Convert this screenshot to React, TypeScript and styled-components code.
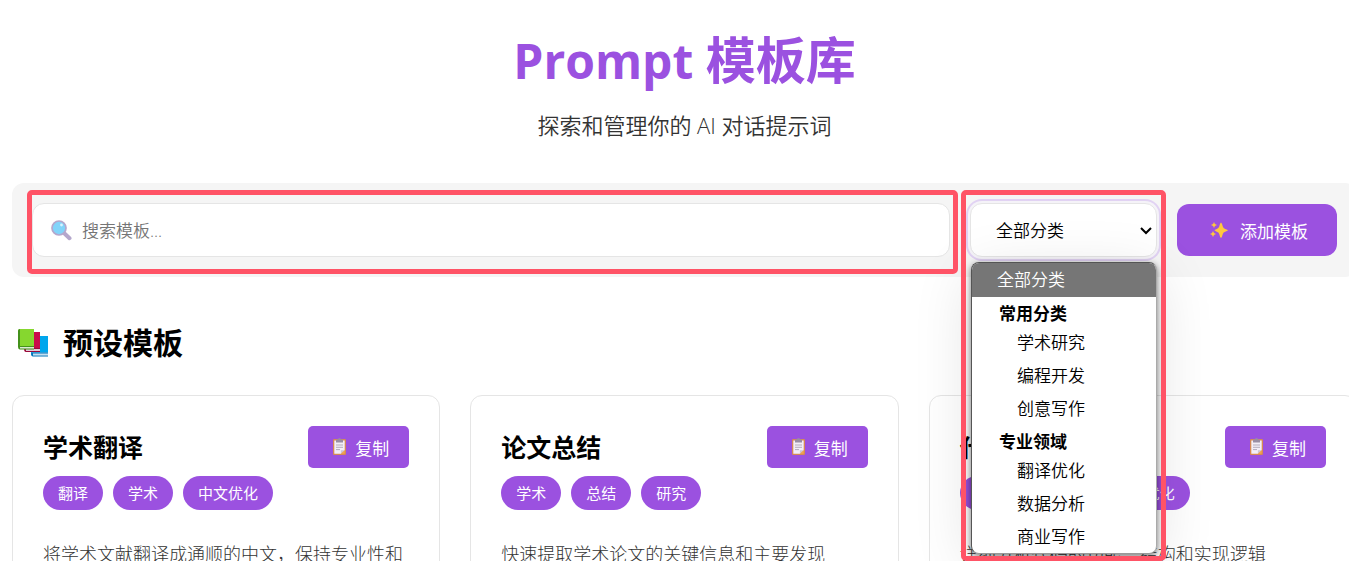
import React from 'react';
import styled, { createGlobalStyle, css } from 'styled-components';

const accent = '#9b51e0';
const mark = '#ff5366';

const GlobalStyle = createGlobalStyle`
  *, *::before, *::after { box-sizing: border-box; }
  html { overflow: hidden; }
  body {
    margin: 0;
    background: #fff;
    color: #000;
    font-family: "Open Sans", "Noto Sans CJK SC", sans-serif;
    font-size: 17px;
    font-weight: 350;
  }
  h1, h2, h3, p, ul { margin: 0; padding: 0; }
  ul { list-style: none; }
  button, input, select { font: inherit; }
`;

const Page = styled.main`
  margin: 0 -8px 0 12px;
`;

const Header = styled.header`
  display: flex;
  flex-direction: column;
  align-items: center;
  gap: 13px;
  padding: 24px 0 43px;
`;

const Title = styled.h1`
  color: ${accent};
  font-size: 50px;
  font-weight: 700;
  line-height: 72px;
`;

const TitleLatin = styled.span`
  font-size: 48px;
`;

const Subtitle = styled.p`
  color: #333;
  font-size: 22px;
  font-weight: 350;
  line-height: 30px;
`;

const Toolbar = styled.section`
  display: flex;
  align-items: center;
  gap: 20px;
  padding: 20px;
  border-radius: 12px;
  background: #f5f5f5;
`;

const SearchBox = styled.label`
  position: relative;
  display: flex;
  flex: 1;
  align-items: center;
  gap: 10px;
  height: 54px;
  padding: 0 18px;
  border: 1px solid #e5e5e5;
  border-radius: 12px;
  background: #fff;
`;

const SearchInput = styled.input`
  flex: 1;
  min-width: 0;
  padding: 0;
  border: 0;
  outline: 0;
  background: transparent;
  &::placeholder { color: #757575; opacity: 1; }
`;

const Filter = styled.div`
  position: relative;
  width: 187px;
`;

const FilterSelect = styled.select`
  display: block;
  width: 100%;
  height: 54px;
  padding: 0 25px;
  border: 1px solid #e5e5e5;
  border-radius: 12px;
  outline: 0;
  appearance: none;
  background: #fff;
  color: #000;
  box-shadow: 0 0 0 2px #f5f3f8, 0 0 0 4px #e1d2f3;
`;

const Chevron = styled.svg`
  position: absolute;
  top: 22px;
  right: 4px;
  pointer-events: none;
`;

const Menu = styled.div`
  position: absolute;
  z-index: 2;
  top: 59px;
  left: 1px;
  right: 0;
  border: 1px solid;
  border-color: #555 #aaa #999 #555;
  border-radius: 8px;
  background: #fff;
  box-shadow: 0 2px 6px rgba(0, 0, 0, 0.5), 0 12px 60px rgba(0, 0, 0, 0.12);
`;

const selectedOption = css`
  height: 34px;
  padding-left: 25px;
  border-radius: 7px 7px 0 0;
  background: #767676;
  color: #fff;
`;

const Option = styled.li<{ $selected?: boolean }>`
  height: 33px;
  padding-left: 45px;
  line-height: 33px;
  ${p => p.$selected && selectedOption}
`;

const GroupLabel = styled.li`
  height: 29px;
  padding: 3px 0 0 27px;
  font-weight: 700;
  line-height: 27px;
`;

const Marker = styled.div<{ $area: 'search' | 'filter' }>`
  position: absolute;
  z-index: 3;
  border: 5px solid ${mark};
  border-radius: 5px;
  pointer-events: none;
  ${p => (p.$area === 'search'
    ? 'inset: -14px -9px -18px -6px;'
    : 'top: -13px; left: -9px; right: -9px; height: 371px;')}
`;

const AddButton = styled.button`
  display: flex;
  align-items: center;
  justify-content: center;
  gap: 12px;
  width: 160px;
  height: 52px;
  padding: 0 0 0 4px;
  border: 0;
  border-radius: 12px;
  background: ${accent};
  color: #fff;
  font-weight: 400;
`;

const SectionTitle = styled.h2`
  display: flex;
  align-items: center;
  gap: 14px;
  padding: 44px 0 30px 5px;
  font-size: 30px;
  font-weight: 700;
  line-height: 44px;
`;

const CardGrid = styled.section`
  display: grid;
  grid-template-columns: repeat(3, 1fr);
  gap: 30px;
`;

const Card = styled.article`
  padding: 30px;
  border: 1px solid #e5e5e5;
  border-radius: 12px;
  background: #fff;
`;

const CardHead = styled.div`
  display: flex;
  align-items: center;
  justify-content: space-between;
`;

const CardTitle = styled.h3`
  font-size: 25px;
  font-weight: 700;
  line-height: 36px;
`;

const CopyButton = styled.button`
  display: flex;
  align-items: center;
  justify-content: center;
  gap: 8px;
  width: 101px;
  height: 42px;
  padding: 0 0 0 4px;
  border: 0;
  border-radius: 5px;
  background: ${accent};
  color: #fff;
  font-weight: 400;
`;

const Tags = styled.ul`
  display: flex;
  gap: 10px;
  margin: 8px 0 29px;
`;

const Tag = styled.li`
  padding: 0 15px;
  border-radius: 17px;
  background: ${accent};
  color: #fff;
  font-size: 15px;
  font-weight: 400;
  line-height: 34px;
`;

const Description = styled.p`
  color: #333;
  font-size: 18px;
  font-weight: 300;
  line-height: 30px;
`;

const SearchIcon = () => (
  <svg width="21" height="21" viewBox="0 0 21 21" aria-hidden="true">
    <path d="M13.5 13.5l5 4.7" stroke="#b4a7cc" strokeWidth="4" strokeLinecap="round" />
    <circle cx="8" cy="8" r="7" fill="#81d4fa" stroke="#b4a7cc" strokeWidth="1.7" />
    <circle cx="10.5" cy="5" r="1.4" fill="#d8f4ff" />
  </svg>
);

const SparkleIcon = () => (
  <svg width="18" height="18" viewBox="0 0 18 18" fill="#ffc83d" aria-hidden="true">
    <path d="M11 1.5Q12 2 12.8 5.5Q13.3 7.3 15.2 7.9Q18 8.8 18 9.3Q18 9.8 15.2 10.7Q13.3 11.3 12.8 13Q12 16.6 11 17Q10 16.6 9.2 13Q8.7 11.3 6.8 10.7Q4.5 9.8 4.5 9.3Q4.5 8.8 6.8 7.9Q8.7 7.3 9.2 5.5Q10 2 11 1.5Z" />
    <path d="M4 1L4.9 3.1L7 4L4.9 4.9L4 7L3.1 4.9L1 4L3.1 3.1ZM3 10L4 12L6 13L4 14L3 16L2 14L0 13L2 12Z" />
  </svg>
);

const BooksIcon = () => (
  <svg width="32" height="30" viewBox="0 0 32 30" aria-hidden="true">
    <path d="M14 10q0-2 2-2h15v18H14z" fill="#00a6ed" />
    <path d="M14 26q0-1.5 2-1.5h15v3H16q-2 0-2-1.5" fill="#c5dff0" />
    <path d="M14 25.5q0 3 2 3h15v-1H16v-2h15v-1H16q-2 0-2 1" fill="#0074ba" />
    <path d="M7 6q0-2 2-2h14v17H7z" fill="#ca0b4a" />
    <path d="M8 21h15v2H8z" fill="#e1cbd8" />
    <path d="M7 20.5q0 3.5 2 3.5h14v-1H9v-2h14v-1H9q-2 0-2 .5" fill="#990839" />
    <path d="M1 3q0-2 2-2h14v18H1z" fill="#86d72f" />
    <path d="M1 3q0-2 2-2v18H1z" fill="#44911b" />
    <path d="M2 19h15v2H2z" fill="#d9ebd4" />
    <path d="M1 18q0 3.5 2 3.5h14v-1H3v-1.5h14v-1H3q-1.5 0-2 .5" fill="#44911b" />
  </svg>
);

const ClipboardIcon = () => (
  <svg width="15" height="18" viewBox="0 0 15 18" aria-hidden="true">
    <rect x="1" y="1" width="13" height="16" rx="1.2" fill="#d68954" />
    <path d="M2.3 2.5h10.4v9.7l-3.8 3.6H2.3z" fill="#f3eef8" />
    <path d="M12.7 12.2l-3.8 3.6v-3.6z" fill="#cdc4d6" />
    <path d="M12.7 12.2v3.6H8.9z" fill="#f3a64e" />
    <path d="M4 1.5h2Q6 0 7.5 0T9 1.5h2v3H4z" fill="#998ea4" />
    <path d="M4 7h7M4 9.3h7M4 11.6h4" stroke="#b4acbc" />
  </svg>
);

const groups = [
  { label: '常用分类', options: ['学术研究', '编程开发', '创意写作'] },
  { label: '专业领域', options: ['翻译优化', '数据分析', '商业写作'] },
];

const templates = [
  { title: '学术翻译', tags: ['翻译', '学术', '中文优化'], text: '将学术文献翻译成通顺的中文，保持专业性和学术准确性' },
  { title: '论文总结', tags: ['学术', '总结', '研究'], text: '快速提取学术论文的关键信息和主要发现' },
  { title: '代码解释', tags: ['编程', '代码', '性能优化'], text: '详细分析代码的功能、结构和实现逻辑' },
];

export default function App() {
  return (
    <>
      <GlobalStyle />
      <Page>
        <Header>
          <Title><TitleLatin>Prompt </TitleLatin>模板库</Title>
          <Subtitle>探索和管理你的 AI 对话提示词</Subtitle>
        </Header>
        <Toolbar>
          <SearchBox>
            <SearchIcon />
            <SearchInput type="text" placeholder="搜索模板..." aria-label="搜索模板" />
            <Marker $area="search" />
          </SearchBox>
          <Filter>
            <FilterSelect aria-label="全部分类" defaultValue="all">
              <option value="all">全部分类</option>
              {groups.map(group => (
                <optgroup key={group.label} label={group.label}>
                  {group.options.map(name => <option key={name}>{name}</option>)}
                </optgroup>
              ))}
            </FilterSelect>
            <Chevron width="14" height="12" viewBox="0 0 14 12" aria-hidden="true">
              <path d="M2 3l5 5 5-5" fill="none" stroke="#000" strokeWidth="2" />
            </Chevron>
            <Menu>
              <ul>
                <Option $selected>全部分类</Option>
                {groups.map(group => (
                  <React.Fragment key={group.label}>
                    <GroupLabel>{group.label}</GroupLabel>
                    {group.options.map(name => <Option key={name}>{name}</Option>)}
                  </React.Fragment>
                ))}
              </ul>
            </Menu>
            <Marker $area="filter" />
          </Filter>
          <AddButton type="button"><SparkleIcon />添加模板</AddButton>
        </Toolbar>
        <SectionTitle><BooksIcon />预设模板</SectionTitle>
        <CardGrid>
          {templates.map(item => (
            <Card key={item.title}>
              <CardHead>
                <CardTitle>{item.title}</CardTitle>
                <CopyButton type="button"><ClipboardIcon />复制</CopyButton>
              </CardHead>
              <Tags>{item.tags.map(tag => <Tag key={tag}>{tag}</Tag>)}</Tags>
              <Description>{item.text}</Description>
            </Card>
          ))}
        </CardGrid>
      </Page>
    </>
  );
}
